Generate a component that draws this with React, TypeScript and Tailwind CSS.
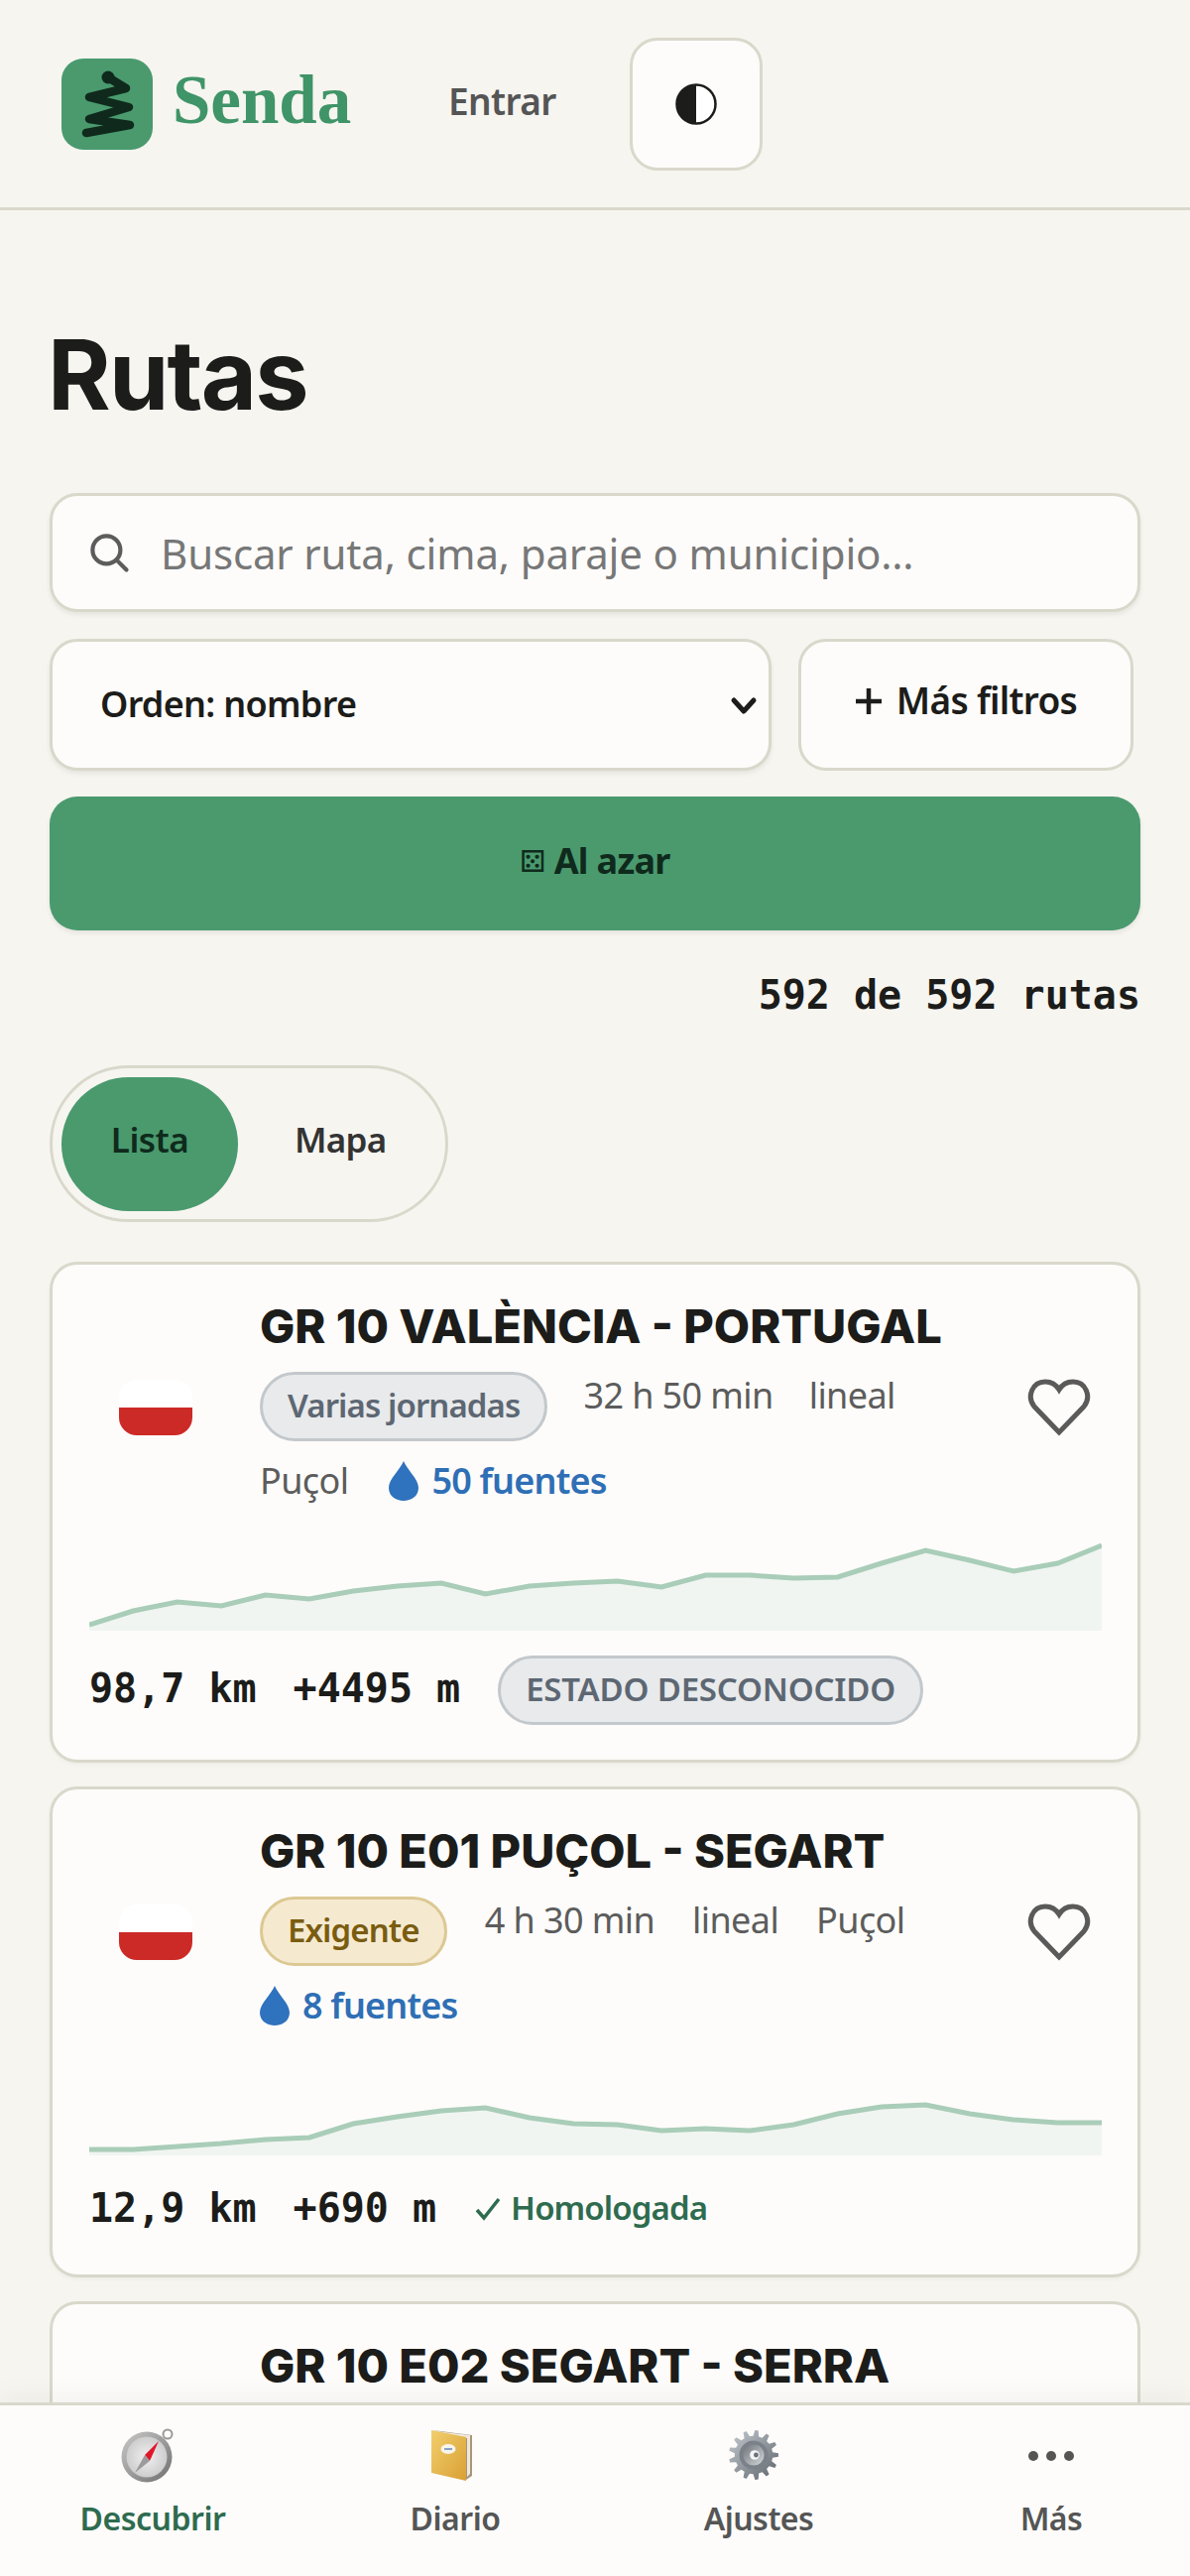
import React from 'react'

const toPoints = (ys: number[], step: number) => ys.map((y, i) => `${(i * step).toFixed(1)},${y}`).join(' ')

const profileA = [87, 73, 64, 68, 57, 61, 53, 48, 45, 56, 48, 45, 43, 49, 37, 37, 40, 39, 25, 12, 22, 33, 25, 7]
const profileB = [87, 87, 84, 81, 77, 75, 61, 54, 48, 45, 55, 61, 62, 68, 66, 68, 62, 51, 44, 42, 51, 57, 60, 60]

const Profile = ({ ys }: { ys: number[] }) => {
  const step = 1021 / (ys.length - 1)
  const pts = toPoints(ys, step)
  return (
    <svg viewBox="0 0 1021 93" className="block w-[1021px] h-[93px]">
      <polygon points={`0,93 ${pts} 1021,93`} fill="#f0f5f1" />
      <polyline points={pts} fill="none" stroke="#a9cdb8" strokeWidth="5" />
    </svg>
  )
}

const Flag = () => (
  <div className="w-[74px] h-[56px] rounded-[18px] overflow-hidden flex flex-col">
    <div className="h-[28px] bg-white" />
    <div className="h-[28px] bg-[#cc2a27]" />
  </div>
)

const Heart = () => (
  <svg viewBox="0 0 64 58" className="w-[64px] h-[58px]" fill="none" stroke="#5a5a5a" strokeWidth="5" strokeLinejoin="miter">
    <path d="M32 54 L7 28 C-1 18 5 3 18 3 C24 3 29 6 32 11 C35 6 40 3 46 3 C59 3 65 18 57 28 Z" />
  </svg>
)

const Drop = ({ cls }: { cls: string }) => (
  <svg viewBox="0 0 30 40" className={cls}>
    <path d="M15 0 C18 8 30 18 30 27 C30 35 23 40 15 40 C7 40 0 35 0 27 C0 18 12 8 15 0 Z" fill="#2f72bd" />
  </svg>
)

const Badge = ({ children, cls }: { children: React.ReactNode; cls: string }) => (
  <span className={`h-[70px] px-[25px] pb-[3px] rounded-full border-[3px] flex items-center text-[33px] font-semibold whitespace-nowrap ${cls}`}>
    {children}
  </span>
)

const Meta = ({ children }: { children: React.ReactNode }) => (
  <span className="h-[48px] leading-[48px] text-[36px] text-[#5c5c5c] tracking-[-0.6px]">{children}</span>
)

const Water = ({ n }: { n: string }) => (
  <span className="h-[48px] flex items-center gap-[13px] text-[36px] font-semibold text-[#2f6fb5] tracking-[-0.8px]">
    <Drop cls="w-[30px] h-[40px]" />
    {n}
  </span>
)

const Mono = ({ children }: { children: React.ReactNode }) => (
  <span className="block pb-[4px] font-['DejaVu_Sans_Mono',monospace] font-bold text-[40px] leading-[60px] text-[#1c1c1a]">{children}</span>
)

const titleCls = "font-['Inter',sans-serif] font-extrabold text-[47px] leading-[60px] tracking-[0px] text-[#1c1c1a] whitespace-nowrap"

const Compass = () => (
  <svg viewBox="0 0 56 56" className="w-[56px] h-[56px] -translate-x-[4px]">
    <defs>
      <linearGradient id="cRing" x1="0" y1="0" x2="1" y2="1">
        <stop offset="0" stopColor="#c9c9c9" />
        <stop offset="1" stopColor="#6f6f6f" />
      </linearGradient>
      <radialGradient id="cFace">
        <stop offset="0" stopColor="#f1f1f1" />
        <stop offset="1" stopColor="#cdcdcd" />
      </radialGradient>
    </defs>
    <circle cx="47" cy="7" r="4.5" fill="#fff" stroke="#9a9a9a" strokeWidth="2" />
    <circle cx="26" cy="30" r="25.5" fill="url(#cRing)" />
    <circle cx="26" cy="30" r="20.5" fill="url(#cFace)" />
    <polygon points="38,14 29,34 24,28" fill="#e0162b" />
    <polygon points="14,46 29,34 24,28" fill="#9b9b9b" />
  </svg>
)

const Book = () => (
  <svg viewBox="0 0 44 52" className="w-[44px] h-[52px] -translate-x-[3px]">
    <defs>
      <linearGradient id="bCover" x1="0" y1="0" x2="1" y2="1">
        <stop offset="0" stopColor="#f2cf6d" />
        <stop offset="1" stopColor="#d9a034" />
      </linearGradient>
    </defs>
    <polygon points="2,1 42,6 42,47 36,51 36,8" fill="#a8967a" />
    <polygon points="5,2 40,6 40,45 37,48 37,9" fill="#efe9dc" />
    <polygon points="1,1 36,8 36,52 1,44" fill="url(#bCover)" />
    <ellipse cx="18" cy="20" rx="7.5" ry="5" fill="#f7f4ea" />
    <rect x="14" y="19" width="8" height="2" fill="#8aa0c8" />
  </svg>
)

const gearPath = () => {
  const out: string[] = []
  for (let i = 0; i < 13; i++) {
    const a = (i / 13) * Math.PI * 2
    const d = (Math.PI * 2) / 13
    const p = (r: number, t: number) => `${(27 + r * Math.cos(t)).toFixed(1)},${(27 + r * Math.sin(t)).toFixed(1)}`
    out.push(p(20, a - d * 0.3), p(26, a - d * 0.14), p(26, a + d * 0.14), p(20, a + d * 0.3))
  }
  return out.join(' ')
}

const Gear = () => (
  <svg viewBox="0 0 54 54" className="w-[52px] h-[52px] -translate-x-[5px]">
    <defs>
      <linearGradient id="gBody" x1="0" y1="0" x2="1" y2="1">
        <stop offset="0" stopColor="#c4cad0" />
        <stop offset="1" stopColor="#5f656c" />
      </linearGradient>
      <linearGradient id="gHub" x1="1" y1="1" x2="0" y2="0">
        <stop offset="0" stopColor="#d5d9dd" />
        <stop offset="1" stopColor="#6d737a" />
      </linearGradient>
    </defs>
    <polygon points={gearPath()} fill="url(#gBody)" />
    <circle cx="27" cy="27" r="15" fill="#7b8188" />
    <circle cx="27" cy="27" r="11" fill="url(#gHub)" />
    <circle cx="28" cy="27" r="5" fill="#f4f5f6" />
    <circle cx="29.5" cy="27" r="2.5" fill="#6b7076" />
  </svg>
)

const Dots = () => (
  <div className="h-[52px] flex items-center gap-[8px] pt-[2px]">
    <div className="w-[10px] h-[10px] rounded-full bg-[#555]" />
    <div className="w-[10px] h-[10px] rounded-full bg-[#555]" />
    <div className="w-[10px] h-[10px] rounded-full bg-[#555]" />
  </div>
)

const NavItem = ({ icon, label, active }: { icon: React.ReactNode; label: string; active?: boolean }) => (
  <div className="flex flex-col items-center">
    <div className="h-[56px] flex items-center justify-center">{icon}</div>
    <span className={`mt-[11px] text-[32px] leading-[50px] font-semibold tracking-[-0.5px] ${active ? 'text-[#2e6b4f]' : 'text-[#555]'}`}>{label}</span>
  </div>
)

export default function App() {
  return (
    <div className="relative h-[2597px] overflow-hidden bg-[#f6f5f0] font-['Noto_Sans',sans-serif] text-[#1c1c1a]">
      <header className="h-[212px] border-b-[3px] border-[#d9d8cb] flex items-center pl-[62px]">
        <div className="w-[92px] h-[92px] rounded-[22px] bg-[#4a9a6e] shrink-0">
          <svg viewBox="0 0 92 92" className="w-[92px] h-[92px]" fill="none" stroke="#0f2a1c" strokeWidth="8.5" strokeLinecap="round" strokeLinejoin="round">
            <circle cx="47" cy="19" r="6.5" fill="#0f2a1c" stroke="none" />
            <path d="M47 19 L65 30 L28 39 L68 49 L28 61 L69 67 L25 75" />
          </svg>
        </div>
        <span className="ml-[20px] w-[278px] pb-[6px] font-['Liberation_Serif',serif] font-bold text-[69px] text-[#3f9468]">Senda</span>
        <span className="text-[37px] pb-[5px] font-semibold text-[#555] tracking-[-0.6px] w-[183px]">Entrar</span>
        <button className="w-[134px] h-[134px] rounded-[28px] bg-[#fdfcfa] border-[3px] border-[#d9d8cb] flex items-center justify-center">
          <svg viewBox="0 0 42 42" className="w-[42px] h-[42px]">
            <circle cx="21" cy="21" r="19.5" fill="#fff" stroke="#1c1c1a" strokeWidth="2.5" />
            <path d="M21 1.5 A19.5 19.5 0 0 0 21 40.5 Z" fill="#1c1c1a" />
          </svg>
        </button>
      </header>

      <main className="px-[50px]">
        <h1 className="mt-[110px] -ml-[2px] font-['Inter',sans-serif] font-bold text-[97px] leading-[112px] tracking-[-1.8px]">Rutas</h1>

        <div className="mt-[63px] h-[120px] rounded-[28px] bg-[#fdfcfa] border-[3px] border-[#d9d8cb] shadow-[0_3px_5px_rgba(0,0,0,0.07)] flex items-center pl-[36px]">
          <svg viewBox="0 0 24 24" className="w-[42px] h-[42px] shrink-0" fill="none" stroke="#5c5c5c" strokeWidth="2.4" strokeLinecap="round">
            <circle cx="10.5" cy="10.5" r="8" />
            <path d="M16.5 16.5 L22 22" />
          </svg>
          <input
            placeholder="Buscar ruta, cima, paraje o municipio…"
            className="ml-[31px] flex-1 bg-transparent outline-none text-[42px] tracking-[-0.15px] text-[#1c1c1a] placeholder:text-[#777]"
          />
        </div>

        <div className="mt-[27px] flex gap-[27px]">
          <div className="relative w-[728px]">
            <select className="appearance-none w-full h-[133px] pl-[48px] pb-[2px] rounded-[28px] bg-[#fdfcfa] border-[3px] border-[#d9d8cb] shadow-[0_3px_5px_rgba(0,0,0,0.07)] text-[36px] font-semibold tracking-[-0.7px] outline-none">
              <option>Orden: nombre</option>
            </select>
            <svg viewBox="0 0 28 20" className="absolute left-[686px] top-[58px] w-[28px] h-[20px]" fill="none" stroke="#1c1c1a" strokeWidth="5" strokeLinecap="round" strokeLinejoin="round">
              <path d="M4 4 L14 15 L24 4" />
            </svg>
          </div>
          <button className="w-[338px] h-[133px] pb-[9px] rounded-[28px] bg-[#fdfcfa] border-[3px] border-[#d9d8cb] flex items-center justify-center gap-[14px] text-[37px] font-semibold tracking-[-0.7px]">
            <svg viewBox="0 0 28 28" className="w-[28px] h-[28px] mt-[2px]" stroke="#1c1c1a" strokeWidth="4.5">
              <path d="M14 1 V27 M1 14 H27" />
            </svg>
            Más filtros
          </button>
        </div>

        <button className="mt-[26px] w-full h-[135px] pb-[5px] rounded-[28px] bg-[#4a9a6e] shadow-[0_3px_5px_rgba(0,0,0,0.07)] flex items-center justify-center gap-[9px] text-[36px] font-bold tracking-[-0.7px] text-[#0f2a1c]">
          <span className="font-['DejaVu_Sans',sans-serif] font-normal text-[30px]">⚄</span>
          Al azar
        </button>

        <p className="mt-[35px] text-right font-['DejaVu_Sans_Mono',monospace] font-bold text-[40px] leading-[60px]">592 de 592 rutas</p>

        <div className="mt-[41px] w-[402px] h-[158px] rounded-full border-[3px] border-[#d9d8cb] flex items-center pl-[9px]">
          <span className="w-[178px] h-[135px] pb-[7px] rounded-full bg-[#4a9a6e] flex items-center justify-center text-[35px] font-semibold tracking-[-0.5px] text-[#0f2a1c]">Lista</span>
          <span className="ml-[57px] pb-[7px] text-[35px] font-semibold tracking-[-0.7px] text-[#333]">Mapa</span>
        </div>

        <section className="mt-[40px] flex flex-col gap-[24px]">
          <article className="rounded-[28px] bg-[#fdfcfa] border-[3px] border-[#d9d8cb] pt-[32px] px-[37px] pb-[35px] shadow-[0_2px_4px_rgba(0,0,0,0.04)]">
            <div className="flex items-center">
              <div className="w-[172px] pl-[30px] shrink-0"><Flag /></div>
              <div className="flex-1 pb-[14px]">
                <h2 className={titleCls}>GR 10 VALÈNCIA - PORTUGAL</h2>
                <div className="mt-[16px] flex flex-wrap gap-x-[36px] gap-y-[16px] items-start">
                  <Badge cls="bg-[#e8eaeb] border-[#c3c8cc] text-[#5d6773] tracking-[-0.9px]">Varias jornadas</Badge>
                  <Meta>32 h 50 min</Meta>
                  <Meta>lineal</Meta>
                  <div className="w-full flex gap-[41px]">
                    <Meta>Puçol</Meta>
                    <Water n="50 fuentes" />
                  </div>
                </div>
              </div>
              <div className="shrink-0 mr-[10px]"><Heart /></div>
            </div>
            <div className="mt-[20px]"><Profile ys={profileA} /></div>
            <div className="mt-[25px] h-[70px] flex items-center">
              <Mono>98,7 km</Mono>
              <span className="ml-[37px]"><Mono>+4495 m</Mono></span>
              <span className="ml-[38px]">
                <Badge cls="bg-[#e8eaeb] border-[#c3c8cc] text-[#5d6773] tracking-[-0.2px]">ESTADO DESCONOCIDO</Badge>
              </span>
            </div>
          </article>

          <article className="rounded-[28px] bg-[#fdfcfa] border-[3px] border-[#d9d8cb] pt-[32px] px-[37px] pb-[35px] shadow-[0_2px_4px_rgba(0,0,0,0.04)]">
            <div className="flex items-center">
              <div className="w-[172px] pl-[30px] shrink-0"><Flag /></div>
              <div className="flex-1 pb-[14px]">
                <h2 className={titleCls}>GR 10 E01 PUÇOL - SEGART</h2>
                <div className="mt-[16px] flex flex-wrap gap-x-[38px] gap-y-[16px] items-start">
                  <Badge cls="bg-[#f5ead0] border-[#dcc892] text-[#7a5c10] tracking-[-0.9px] px-[22px]">Exigente</Badge>
                  <Meta>4 h 30 min</Meta>
                  <Meta>lineal</Meta>
                  <Meta>Puçol</Meta>
                  <div className="w-full flex"><Water n="8 fuentes" /></div>
                </div>
              </div>
              <div className="shrink-0 mr-[10px]"><Heart /></div>
            </div>
            <div className="mt-[20px]"><Profile ys={profileB} /></div>
            <div className="mt-[25px] h-[60px] flex items-center">
              <Mono>12,9 km</Mono>
              <span className="ml-[37px]"><Mono>+690 m</Mono></span>
              <span className="ml-[39px] pb-[5px] flex items-center gap-[10px] text-[33px] font-semibold tracking-[-0.9px] text-[#2e6b4f]">
                <svg viewBox="0 0 26 24" className="w-[26px] h-[24px] mt-[3px]" fill="none" stroke="#2e6b4f" strokeWidth="3.5">
                  <path d="M2 13 L9 21 L24 2" />
                </svg>
                Homologada
              </span>
            </div>
          </article>

          <article className="rounded-[28px] bg-[#fdfcfa] border-[3px] border-[#d9d8cb] pt-[32px] px-[37px] pb-[35px]">
            <div className="pl-[172px]">
              <h2 className={titleCls}>GR 10 E02 SEGART - SERRA</h2>
            </div>
          </article>
        </section>
      </main>

      <nav className="absolute left-0 right-0 bottom-0 h-[175px] bg-[#fdfcfa] border-t-[3px] border-[#d9d8cb] shadow-[0_-8px_24px_rgba(0,0,0,0.04)] grid grid-cols-[308px_302px_310px_280px] pt-[22px]">
        <NavItem icon={<Compass />} label="Descubrir" active />
        <NavItem icon={<Book />} label="Diario" />
        <NavItem icon={<Gear />} label="Ajustes" />
        <NavItem icon={<Dots />} label="Más" />
      </nav>
    </div>
  )
}
